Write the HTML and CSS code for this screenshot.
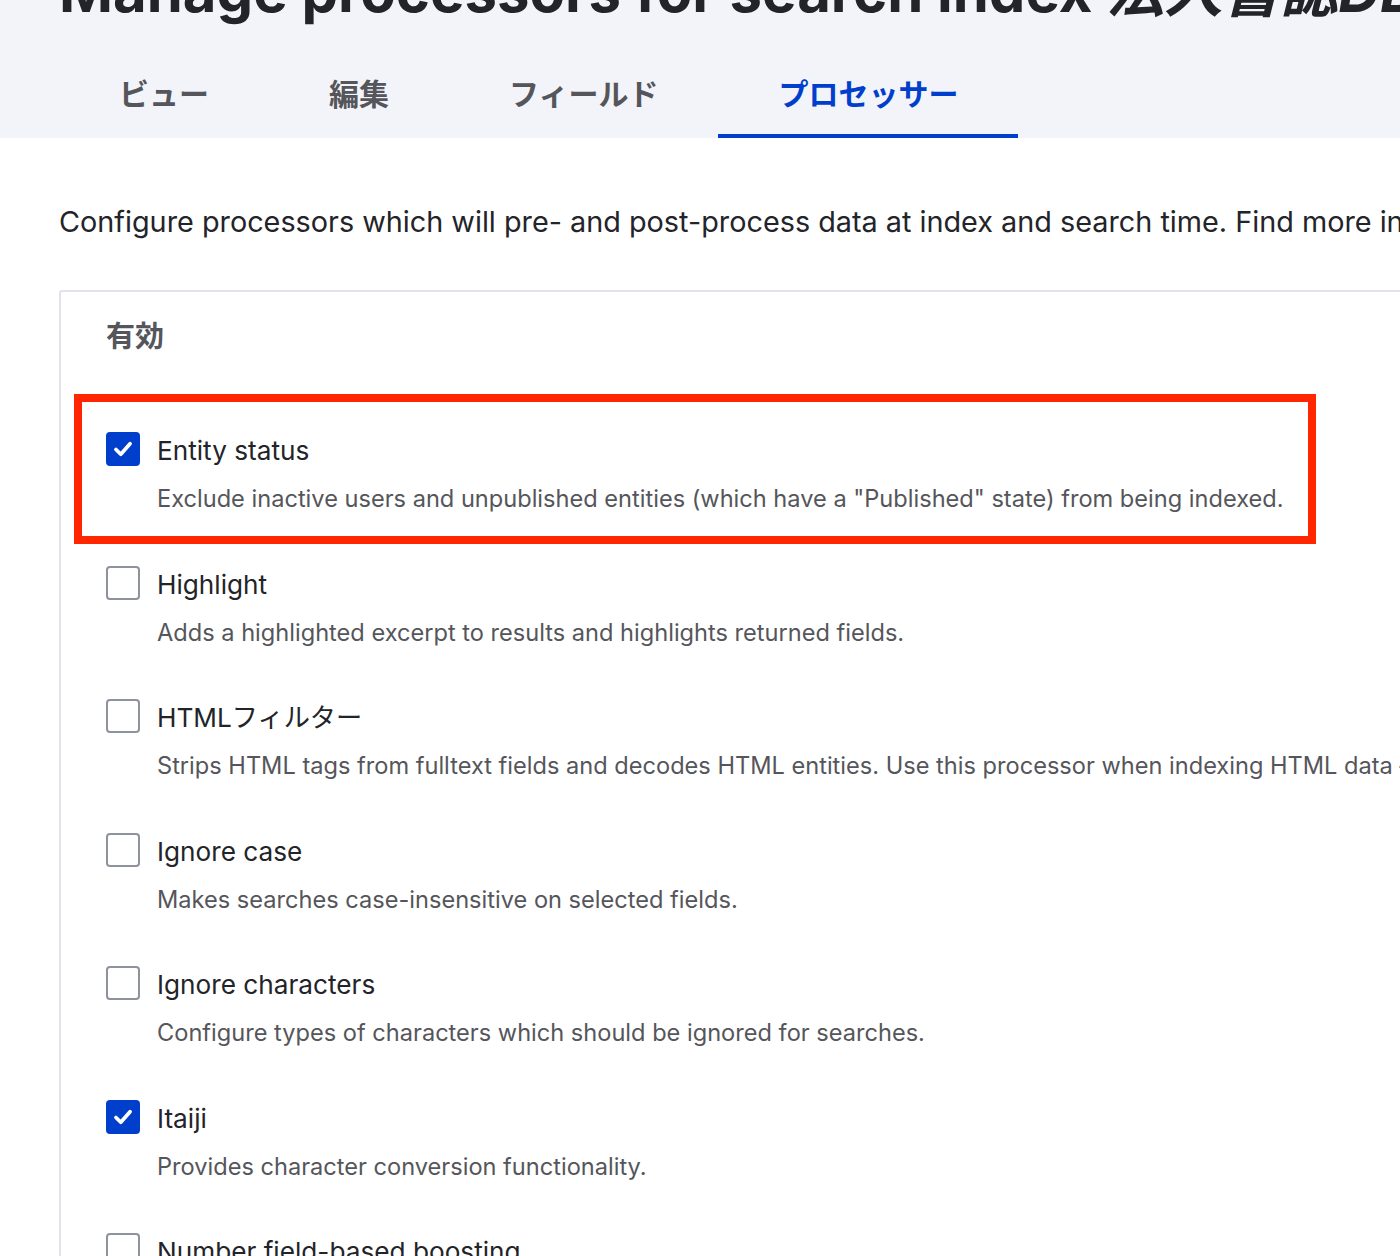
FILE: index.html
```html
<!DOCTYPE html>
<html lang="ja">
<head>
    <meta charset="UTF-8">
    <meta name="viewport" content="width=device-width, initial-scale=1.0">
    <title>Manage processors for search index</title>
    <link rel="stylesheet" href="styles.css">
</head>
<body>
    <header class="page-header">
        <h1 class="page-title">Manage processors for search index <em>法人書誌DB</em></h1>
        <nav class="tabs">
            <a class="tab" href="#">ビュー</a>
            <a class="tab" href="#">編集</a>
            <a class="tab" href="#">フィールド</a>
            <a class="tab is-active" href="#">プロセッサー</a>
        </nav>
    </header>

    <main class="content">
        <p class="intro">Configure processors which will pre- and post-process data at index and search time. Find more information on the processors in the documentation.</p>

        <section class="card">
            <h2 class="card-title">有効</h2>

            <div class="item is-marked">
                <span class="checkbox is-checked"><svg viewBox="0 0 34 34"><path d="M9 17.5l5.5 5.5 10.5-12"/></svg></span>
                <span class="item-label">Entity status</span>
                <span class="item-desc">Exclude inactive users and unpublished entities (which have a "Published" state) from being indexed.</span>
            </div>

            <div class="item">
                <span class="checkbox"></span>
                <span class="item-label">Highlight</span>
                <span class="item-desc">Adds a highlighted excerpt to results and highlights returned fields.</span>
            </div>

            <div class="item">
                <span class="checkbox"></span>
                <span class="item-label">HTMLフィルター</span>
                <span class="item-desc">Strips HTML tags from fulltext fields and decodes HTML entities. Use this processor when indexing HTML data – for example, node bodies for certain text formats.</span>
            </div>

            <div class="item">
                <span class="checkbox"></span>
                <span class="item-label">Ignore case</span>
                <span class="item-desc">Makes searches case-insensitive on selected fields.</span>
            </div>

            <div class="item">
                <span class="checkbox"></span>
                <span class="item-label">Ignore characters</span>
                <span class="item-desc">Configure types of characters which should be ignored for searches.</span>
            </div>

            <div class="item">
                <span class="checkbox is-checked"><svg viewBox="0 0 34 34"><path d="M9 17.5l5.5 5.5 10.5-12"/></svg></span>
                <span class="item-label">Itaiji</span>
                <span class="item-desc">Provides character conversion functionality.</span>
            </div>

            <div class="item">
                <span class="checkbox"></span>
                <span class="item-label">Number field-based boosting</span>
                <span class="item-desc">Adds a boost to indexed items based on the value of a numeric field.</span>
            </div>
        </section>
    </main>
</body>
</html>
```

FILE: styles.css
```css
html {
    overflow: hidden;
}
body {
    margin: 0;
    font-family: Inter, "Noto Sans CJK JP", sans-serif;
    color: #232429;
    background: #fff;
}
.page-header {
    background-color: #f3f4f9;
    padding: 0 0 0 59px;
}
.page-title {
    margin: -44px 0 0;
    font-size: 58px;
    line-height: 70px;
    font-weight: 700;
    white-space: nowrap;
    color: #232429;
}
.page-title em {
    font-style: italic;
}
.tabs {
    display: flex;
    margin-top: 22px;
}
.tab {
    padding: 31px 60px 25px;
    font-size: 30px;
    line-height: 30px;
    font-weight: 700;
    color: #55565b;
    text-decoration: none;
    border-bottom: 4px solid transparent;
}
.tab.is-active {
    color: #003ecc;
    border-bottom-color: #003ecc;
}
.content {
    padding: 0 0 0 59px;
    width: 1700px;
}
.intro {
    margin: 64px 0 48px;
    font-size: 28.8px;
    line-height: 40px;
    white-space: nowrap;
}
.card {
    border: 2px solid #e2e3e8;
    border-radius: 3px;
    padding: 25px 0 0 45px;
}
.card-title {
    margin: 0 0 76px;
    font-size: 29px;
    line-height: 40px;
    font-weight: 700;
    color: #55565b;
}
.item {
    position: relative;
    display: grid;
    grid-template-columns: 34px 1fr;
    column-gap: 17px;
    row-gap: 12px;
    margin-bottom: 49.5px;
}
.checkbox {
    box-sizing: border-box;
    width: 34px;
    height: 34px;
    margin-top: -1px;
    border: 2px solid #8e929c;
    border-radius: 4px;
    background: #fff;
}
.checkbox.is-checked {
    border-color: #003ecc;
    background: #003ecc;
}
.checkbox svg {
    display: block;
    width: 30px;
    height: 30px;
}
.checkbox path {
    fill: none;
    stroke: #fff;
    stroke-width: 4.2;
    stroke-linecap: round;
    stroke-linejoin: round;
}
.item-label {
    font-size: 26.2px;
    line-height: 36px;
    white-space: nowrap;
}
.item-desc {
    grid-column: 2;
    font-size: 23.6px;
    line-height: 36px;
    color: #55565b;
    white-space: nowrap;
}
/* red annotation frame around the first processor */
.item.is-marked::after {
    content: "";
    position: absolute;
    top: -39px;
    left: -32px;
    width: 1242px;
    height: 150px;
    box-sizing: border-box;
    border: 8px solid #ff2600;
}
```
